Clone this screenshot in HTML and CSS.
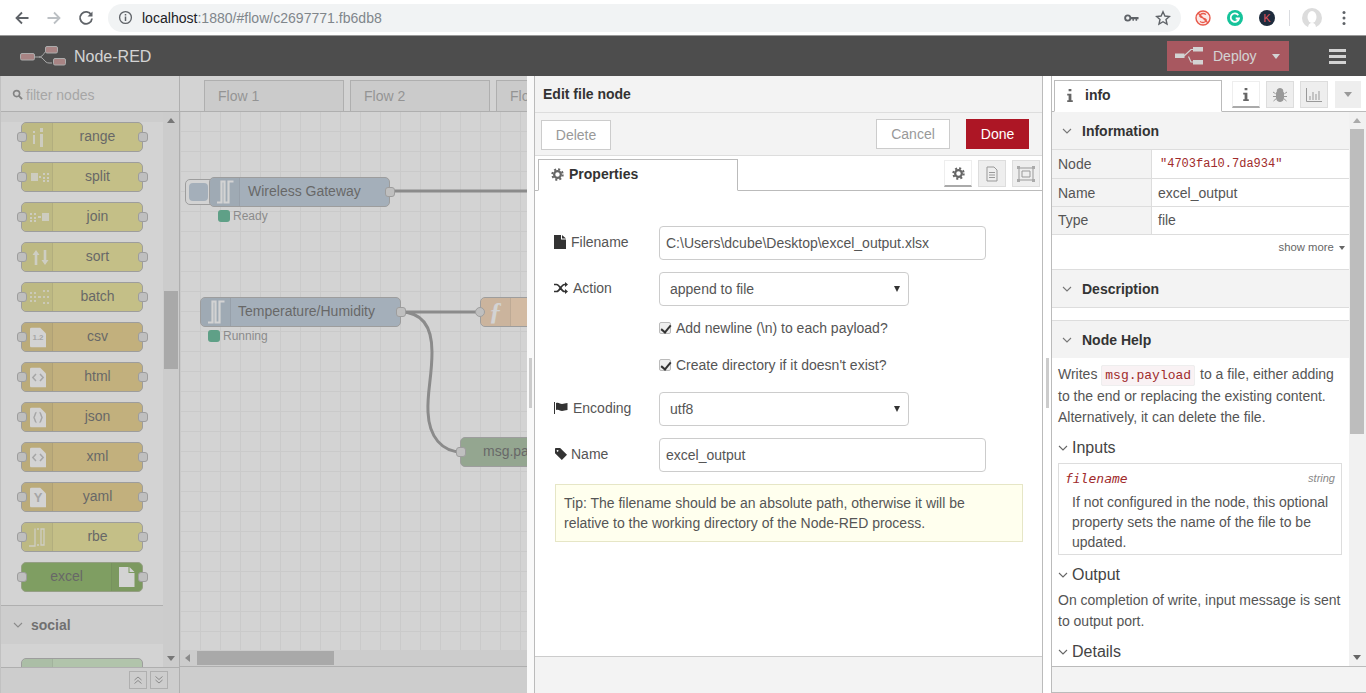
FILE: index.html
```html
<!DOCTYPE html>
<html lang="en">
<head>
<meta charset="utf-8">
<title>Node-RED</title>
<link rel="stylesheet" href="styles.css">
</head>
<body>
<svg class="defs" width="0" height="0">
  <symbol id="file" viewBox="0 0 12 14"><path d="M0 0h7v4.500h5V14H0zM8 0l4 3.500H8z"/></symbol>
  <symbol id="cog" viewBox="0 0 14 14"><circle cx="7" cy="7" r="3.600" fill="none" stroke="currentColor" stroke-width="2.400"/><circle cx="7" cy="7" r="5.600" fill="none" stroke="currentColor" stroke-width="2.200" stroke-dasharray="2.200 2.200"/></symbol>
  <symbol id="chev" viewBox="0 0 10 6"><path d="M1 1l4 4 4-4" fill="none" stroke="currentColor" stroke-width="1.100"/></symbol>
  <symbol id="doc" viewBox="0 0 16 20"><path d="M0 1.500Q0 0 1.500 0H10l6 6v14H1.500Q0 20 0 18.500z" fill="#fff"/></symbol>
  <symbol id="pulse" viewBox="0 0 18 24"><path d="M1 22.500h4.500V1.500h3V22.500h4V1.500h5" fill="none" stroke="#fff" stroke-width="2.200"/></symbol>
</svg>

<div class="browser">
  <svg class="nav" viewBox="0 0 16 16"><path d="M14.500 8H3M8 2.500L2.500 8 8 13.500" fill="none" stroke="#5f6368" stroke-width="1.800"/></svg>
  <svg class="nav" viewBox="0 0 16 16"><path d="M1.500 8H13M8 2.500L13.500 8 8 13.500" fill="none" stroke="#bcc0c4" stroke-width="1.800"/></svg>
  <svg class="nav" viewBox="0 0 16 16"><path d="M13.300 5A6 6 0 1 0 14 8.500" fill="none" stroke="#5f6368" stroke-width="1.800"/><path d="M14.500 1.500v5h-5z" fill="#5f6368"/></svg>
  <div class="omnibox">
    <svg class="url-info" viewBox="0 0 16 16"><circle cx="8" cy="8" r="6.300" fill="none" stroke="#5f6368" stroke-width="1.400"/><path d="M7.200 7h1.600v4.800H7.200zM7.200 4.200h1.600v1.600H7.200z" fill="#5f6368"/></svg>
    <span class="url"><span class="url-host">localhost</span>:1880/#flow/c2697771.fb6db8</span>
    <svg class="key" viewBox="0 0 16 10"><circle cx="4" cy="5" r="2.800" fill="none" stroke="#5f6368" stroke-width="2"/><path d="M6.500 3.800H15.500V6.200H14V8H12.300V6.200H10.600V8H9V6.200H6.500z" fill="#5f6368"/></svg>
    <svg class="star" viewBox="0 0 16 16"><path d="M8 1.800l1.900 4.200 4.500.5-3.400 3 1 4.500L8 11.700 4 14l1-4.500-3.400-3 4.500-.5z" fill="none" stroke="#5f6368" stroke-width="1.400"/></svg>
  </div>
  <div class="ext-row">
    <svg class="ext" viewBox="0 0 16 16"><circle cx="8" cy="8" r="7" fill="#fbe9e7" stroke="#e8594a" stroke-width="1.400"/><path d="M11 4.500Q8 2.500 5.500 4.500T8 8t2.500 3.500Q8 13.500 5 11.500M3 3l10 10" fill="none" stroke="#e8594a" stroke-width="1.300"/></svg>
    <svg class="ext" viewBox="0 0 16 16"><circle cx="8" cy="8" r="8" fill="#15c39a"/><path d="M11.300 5.200A4.200 4.200 0 1 0 12 8.500H8.700" fill="none" stroke="#fff" stroke-width="1.800"/></svg>
    <div class="ext-k">K</div>
    <div class="ext-div"></div>
    <svg class="avatar" viewBox="0 0 20 20"><circle cx="10" cy="10" r="10" fill="#dcdcdc"/><ellipse cx="10" cy="9" rx="4.500" ry="6" fill="#fff"/><path d="M6 20q0-5 4-5t4 5z" fill="#fff"/></svg>
    <svg class="dots" viewBox="0 0 4 16"><circle cx="2" cy="2.500" r="1.500"/><circle cx="2" cy="8" r="1.500"/><circle cx="2" cy="13.500" r="1.500"/></svg>
  </div>
</div>

<header class="app-header">
  <svg class="logo" viewBox="0 0 46 20">
    <path d="M15 11h4C24 11 24 4 29 4h2M19 11c5 0 5 6 10 6h3" fill="none" stroke="#b5b5b5" stroke-width="1"/>
    <rect x="0.500" y="7.500" width="14" height="6.500" rx="1.500" fill="#ad6a6a" stroke="#b5b5b5"/>
    <rect x="25.500" y="0.500" width="12" height="6.500" rx="1.500" fill="#ad6a6a" stroke="#b5b5b5"/>
    <rect x="33.500" y="12.500" width="12" height="6.500" rx="1.500" fill="#ad6a6a" stroke="#b5b5b5"/>
  </svg>
  <span class="brand">Node-RED</span>
  <div class="deploy">
    <svg class="deploy-icon" viewBox="0 0 28 18"><path d="M0 6.500h9.500v4.500H0zM18 0h10v4.500H18zM18 13h10v4.500H18z" fill="#fff"/><path d="M9 9L16 2.500h3M13.500 9.500L16 15h3" fill="none" stroke="#fff" stroke-width="1.200"/></svg>
    <span class="deploy-label">Deploy</span>
    <span class="caret deploy-caret"></span>
  </div>
  <div class="burger"><i></i><i></i><i></i></div>
</header>

<main class="main">
  <div class="dimmed">
    <aside class="palette">
      <div class="filter">
        <svg class="search" viewBox="0 0 12 12"><circle cx="5" cy="5" r="3.300" fill="none" stroke="#666" stroke-width="1.800"/><path d="M7.500 7.500L11 11" stroke="#666" stroke-width="2"/></svg>
        <span>filter nodes</span>
      </div>
      <div class="pal-scroll">
        <div class="pal-list">
          <div class="pnode fn"><span class="port l"></span><span class="picon"><svg width="24" height="24" viewBox="-4 -1 24 24" fill="#fff" opacity=".75"><path d="M4 9h2v9H4zM4 5h2v2H4zM11 8h3v13h-3zM11 2h3v4h-3z"/></svg></span><span class="plabel">range</span><span class="port r"></span></div>
          <div class="pnode fn"><span class="port l"></span><span class="picon"><svg width="24" height="24" viewBox="-2 0 24 24" fill="#fff" opacity=".75"><path d="M4 8h7v8H4zM12 11h2v2h-2zM16 8h2v2h-2zM20 8h2v2h-2zM16 12h2v2h-2zM20 12h2v2h-2zM16 15h2v2h-2zM20 15h2v2h-2z"/></svg></span><span class="plabel">split</span><span class="port r"></span></div>
          <div class="pnode fn"><span class="port l"></span><span class="picon"><svg width="24" height="24" viewBox="-2 0 24 24" fill="#fff" opacity=".75"><path d="M3 8h2v2H3zM7 8h2v2H7zM3 12h2v2H3zM7 12h2v2H7zM3 15h2v2H3zM7 15h2v2H7zM11 11h3v2h-3zM15 8h7v8h-7z"/></svg></span><span class="plabel">join</span><span class="port r"></span></div>
          <div class="pnode fn"><span class="port l"></span><span class="picon"><svg width="24" height="24" viewBox="-4 0 24 24" fill="#fff" opacity=".8"><path d="M7 5l3.500 5H8.300v10H5.700V10H3.500zM16 20l-3.500-5h2.200V5h2.600v10h2.200z"/></svg></span><span class="plabel">sort</span><span class="port r"></span></div>
          <div class="pnode fn"><span class="port l"></span><span class="picon"><svg width="24" height="24" viewBox="-2 0 24 24" fill="#fff" opacity=".65"><path d="M3 7h2v2H3zM7 7h2v2H7zM3 11h2v2H3zM7 11h2v2H7zM3 15h2v2H3zM7 15h2v2H7zM11 11h3v2h-3zM16 5h2v2h-2zM20 5h2v2h-2zM16 11h2v2h-2zM20 11h2v2h-2zM16 17h2v2h-2zM20 17h2v2h-2z"/></svg></span><span class="plabel">batch</span><span class="port r"></span></div>
          <div class="pnode pr"><span class="port l"></span><span class="picon"><svg class="doci" viewBox="0 0 16 20"><use href="#doc"/><text x="8" y="12" class="doct">1.2</text></svg></span><span class="plabel">csv</span><span class="port r"></span></div>
          <div class="pnode pr"><span class="port l"></span><span class="picon"><svg class="doci" viewBox="0 0 16 20"><use href="#doc"/><path d="M6 6.500L2.800 10 6 13.500M10 6.500l3.200 3.500L10 13.500" class="docs"/></svg></span><span class="plabel">html</span><span class="port r"></span></div>
          <div class="pnode pr"><span class="port l"></span><span class="picon"><svg class="doci" viewBox="0 0 16 20"><use href="#doc"/><path d="M6.500 5C4.500 5 5.500 9.500 3.500 10 5.500 10.500 4.500 15 6.500 15M9.500 5c2 0 1 4.500 3 5-2 .5-1 5-3 5" class="docs"/></svg></span><span class="plabel">json</span><span class="port r"></span></div>
          <div class="pnode pr"><span class="port l"></span><span class="picon"><svg class="doci" viewBox="0 0 16 20"><use href="#doc"/><path d="M6 6.500L2.800 10 6 13.500M10 6.500l3.200 3.500L10 13.500" class="docs"/></svg></span><span class="plabel">xml</span><span class="port r"></span></div>
          <div class="pnode pr"><span class="port l"></span><span class="picon"><svg class="doci" viewBox="0 0 16 20"><use href="#doc"/><text x="8" y="14" class="doct big">Y</text></svg></span><span class="plabel">yaml</span><span class="port r"></span></div>
          <div class="pnode fn"><span class="port l"></span><span class="picon"><svg width="24" height="24" viewBox="-2 0 24 24" opacity=".8"><path d="M8 3.500V21H2M14 4h3v16h-3zM10 4h2M10 20h2" fill="none" stroke="#fff" stroke-width="1.300"/></svg></span><span class="plabel">rbe</span><span class="port r"></span></div>
          <div class="pnode xl"><span class="port l"></span><span class="plabel">excel</span><span class="picon right"><svg width="16" height="20" viewBox="0 0 16 20"><path d="M0 0h9.500v6H15.500v14H0zM10.500 0l5 5h-5z" fill="#fff"/></svg></span><span class="port r"></span></div>
        </div>
        <div class="pal-cat">
          <svg class="chev"><use href="#chev"/></svg>
          <span>social</span>
        </div>
        <div class="pal-list short">
          <div class="pnode tw"><span class="picon"></span></div>
        </div>
        <div class="vbar"><span class="sb-up"></span><span class="thumb"></span><span class="sb-down"></span></div>
      </div>
      <div class="pal-foot">
        <span class="foot-btn">
          <svg width="10" height="10" viewBox="0 0 10 10"><path d="M1.500 5L5 2l3.500 3M1.500 8.500L5 5.500l3.500 3" fill="none" stroke="#777"/></svg>
        </span>
        <span class="foot-btn">
          <svg width="10" height="10" viewBox="0 0 10 10"><path d="M1.500 1.500L5 4.500l3.500-3M1.500 5L5 8l3.500-3" fill="none" stroke="#777"/></svg>
        </span>
      </div>
    </aside>

    <section class="workspace">
      <div class="ws-tabs">
        <div class="ws-tab">Flow 1</div>
        <div class="ws-tab">Flow 2</div>
        <div class="ws-tab">Flow 3</div>
      </div>
      <div class="canvas">
        <svg class="wires" width="347" height="538" viewBox="0 0 347 538">
          <path d="M215 79H347" />
          <path d="M220 200H305" />
          <path d="M220 200C243 200 252 215 252 240S247 280 248 300C249 325 262 340 282 340" />
        </svg>
        <div class="btn-stub"><i></i></div>
        <div class="cnode blue gw"><span class="cicon"><svg width="18" height="24"><use href="#pulse"/></svg></span><span class="clabel">Wireless Gateway</span><span class="cport r"></span></div>
        <div class="status st1"><i></i>Ready</div>
        <div class="cnode blue th"><span class="cicon"><svg width="18" height="24"><use href="#pulse"/></svg></span><span class="clabel">Temperature/Humidity</span><span class="cport r"></span></div>
        <div class="status st2"><i></i>Running</div>
        <div class="cnode fnc"><span class="cport l"></span><span class="cicon"><span class="fsym">ƒ</span></span></div>
        <div class="cnode dbg"><span class="cport l sq"></span><span class="clabel">msg.payload</span></div>
      </div>
      <div class="hbar"><span class="hb-left"></span><span class="hthumb"></span></div>
      <div class="ws-foot"></div>
    </section>
  </div>

  <section class="tray-wrap">
    <div class="grip"></div>
    <div class="tray">
      <div class="tray-title">Edit file node</div>
      <div class="tray-actions">
        <button class="tbtn del">Delete</button>
        <span class="spacer"></span>
        <button class="tbtn cancel">Cancel</button>
        <button class="tbtn done">Done</button>
      </div>
      <div class="tray-tabs">
        <div class="ptab"><svg class="cogi"><use href="#cog"/></svg>Properties</div>
        <span class="spacer"></span>
        <span class="tbox on"><svg class="cogi"><use href="#cog"/></svg></span>
        <span class="tbox"><svg width="12" height="16" viewBox="0 0 12 16"><path d="M1 1h7l3 3v11H1zM3 6.500h6M3 9h6M3 11.500h6" fill="none" stroke="#999"/></svg></span>
        <span class="tbox"><svg width="18" height="16" viewBox="0 0 18 16"><path d="M2 2h14v12H2zM5 5h8v6H5z" fill="none" stroke="#999"/><path d="M0 0h3v3H0zM15 0h3v3h-3zM0 13h3v3H0zM15 13h3v3h-3z" fill="#aaa"/></svg></span>
      </div>
      <form class="form">
        <div class="frow">
          <label class="flabel"><svg class="fico fi-file" viewBox="0 0 12 14"><use href="#file"/></svg>Filename</label>
          <div class="field wide">C:\Users\dcube\Desktop\excel_output.xlsx</div>
        </div>
        <div class="frow">
          <label class="flabel"><svg class="fico" viewBox="0 0 14 12"><path d="M0 2.500h2.500C6 2.500 7 9.500 10.500 9.500H12M0 9.500h2.500C6 9.500 7 2.500 10.500 2.500H12" fill="none" stroke="#333" stroke-width="1.700"/><path d="M11 0l3 2.500L11 5zM11 7l3 2.500L11 12z" fill="#333"/></svg>Action</label>
          <div class="field sel"><span>append to file</span><i class="sel-arrow"></i></div>
        </div>
        <div class="crow"><span class="check"></span>Add newline (\n) to each payload?</div>
        <div class="crow"><span class="check"></span>Create directory if it doesn't exist?</div>
        <div class="frow">
          <label class="flabel"><svg class="fico" viewBox="0 0 14 12"><path d="M0 0h1v12H0z" fill="#333"/><path d="M2 1c3-1 4 1 6 1s3-1 5.500-1v7c-2.500 0-3.500 1-5.500 1S5 7 2 8z" fill="#333"/></svg>Encoding</label>
          <div class="field sel"><span>utf8</span><i class="sel-arrow"></i></div>
        </div>
        <div class="frow">
          <label class="flabel"><svg class="fico fi-tag" viewBox="0 0 14 14"><path fill-rule="evenodd" d="M0 1q0-1 1-1h5l8 8-6 6-8-8zM3 2.200a1 1 0 1 0 .01 0z" fill="#333"/></svg>Name</label>
          <div class="field wide">excel_output</div>
        </div>
        <div class="tip">Tip: The filename should be an absolute path, otherwise it will be relative to the working directory of the Node-RED process.</div>
      </form>
      <div class="tray-foot"></div>
    </div>
    <div class="grip right"></div>
  </section>

  <aside class="sidebar">
    <div class="side-tabs">
      <div class="stab"><svg class="iico" viewBox="0 0 6 14"><path d="M1.500 0h3v2.500h-3zM0 5h4.500v7H6v2H0v-2h1.500V7H0z"/></svg>info</div>
      <span class="sbox on"><svg class="iico" viewBox="0 0 6 14"><path d="M1.500 0h3v2.500h-3zM0 5h4.500v7H6v2H0v-2h1.500V7H0z"/></svg></span>
      <span class="sbox"><svg width="14" height="14" viewBox="0 0 14 14" fill="#999"><path d="M4 3.500a3 3 0 0 1 6 0zM3.500 4.500h7V10a3.500 3.500 0 0 1-7 0zM0 4l2.700 1.800M14 4l-2.700 1.800M0 8.500h3M14 8.500h-3M.5 13L3 10.800M13.500 13L11 10.800" stroke="#999"/></svg></span>
      <span class="sbox"><svg width="16" height="14" viewBox="0 0 16 14"><path d="M.5 0v13.500H16M4 12V8M7 12V4M10 12V6M13 12V3" fill="none" stroke="#999"/></svg></span>
      <span class="sbox plain"><span class="caret side-caret"></span></span>
    </div>
    <div class="side-scroll">
      <div class="side-content">
        <div class="shead first"><svg class="chev"><use href="#chev"/></svg>Information</div>
        <div class="irow r1"><div class="ikey">Node</div><div class="ival mono">"4703fa10.7da934"</div></div>
        <div class="irow"><div class="ikey">Name</div><div class="ival">excel_output</div></div>
        <div class="irow r3"><div class="ikey">Type</div><div class="ival">file</div></div>
        <div class="more">show more <span class="more-caret"></span></div>
        <div class="shead"><svg class="chev"><use href="#chev"/></svg>Description</div>
        <div class="sgap"></div>
        <div class="shead"><svg class="chev"><use href="#chev"/></svg>Node Help</div>
        <div class="help">
          <p class="hp">Writes <code class="code">msg.payload</code> to a file, either adding to the end or replacing the existing content. Alternatively, it can delete the file.</p>
          <h3 class="hh"><svg class="chev"><use href="#chev"/></svg>Inputs</h3>
          <div class="dl">
            <div class="dt"><span class="dn">filename</span><span class="dtype">string</span></div>
            <div class="dd">If not configured in the node, this optional property sets the name of the file to be updated.</div>
          </div>
          <h3 class="hh o"><svg class="chev"><use href="#chev"/></svg>Output</h3>
          <p class="hp out">On completion of write, input message is sent to output port.</p>
          <h3 class="hh d"><svg class="chev"><use href="#chev"/></svg>Details</h3>
        </div>
      </div>
      <div class="side-bar"><span class="sb-up"></span><span class="sthumb"></span><span class="sb-down"></span></div>
    </div>
    <div class="side-foot"></div>
  </aside>
</main>
</body>
</html>
```

FILE: styles.css
```css
* { box-sizing: border-box; }
html, body { margin: 0; height: 100%; }
body {
  width: 1366px; height: 693px; overflow: hidden;
  display: flex; flex-direction: column;
  font-family: "Liberation Sans", Arial, sans-serif;
  font-size: 14px; color: #555; background: #fff;
}
.defs { position: absolute; }

/* browser chrome */
.browser {
  height: 36px; flex: none; display: flex; align-items: center;
  padding: 0 0 0 14px; border-bottom: 1px solid #999; background: #fff;
}
.nav { width: 16px; height: 16px; margin-right: 16px; flex: none; }
.nav:nth-of-type(3) { margin-right: 14px; }
.omnibox {
  width: 1073px; height: 28px; border-radius: 14px; background: #f1f3f4;
  display: flex; align-items: center; padding: 0 9px 0 10px; flex: none;
}
.url-info { width: 15px; height: 15px; margin-right: 9px; }
.url { font-size: 14.050px; color: #80868b; flex: 1; }
.url-host { color: #202124; }
.key { width: 15px; height: 10px; margin-right: 16px; }
.star { width: 16px; height: 16px; margin-right: 1px; }
.ext-row { display: flex; align-items: center; flex: 1; padding-left: 14px; }
.ext { width: 16px; height: 16px; margin-right: 16px; flex: none; }
.ext-k {
  width: 16px; height: 16px; border-radius: 50%; background: #1e2b3c; color: #e0525e;
  font-size: 11px; line-height: 16px; text-align: center; flex: none;
}
.ext-div { width: 1px; height: 16px; background: #dadce0; margin: 0 12px 0 14px; }
.avatar { width: 20px; height: 20px; margin-right: 20px; }
.dots { width: 4px; height: 16px; fill: #5f6368; }

/* header */
.app-header {
  position: relative; height: 40px; flex: none; background: #000;
  display: flex; align-items: center; padding-left: 20px; color: #fff;
}
.app-header::after, .dimmed::after {
  content: ""; position: absolute; inset: 0; background: #a2a2a2; opacity: .475; pointer-events: none;
}
.logo { width: 46px; height: 20px; }
.brand { font-size: 16px; margin-left: 8px; color: #fff; position: relative; top: 1px; }
.deploy {
  margin-left: auto; width: 122px; height: 30px; background: #AD1625;
  display: flex; align-items: center; color: #fff;
}
.deploy-icon { width: 28px; height: 18px; margin-left: 8px; }
.deploy-label { margin-left: 10px; }
.caret { width: 0; height: 0; border-left: 4.500px solid transparent; border-right: 4.500px solid transparent; border-top: 5px solid #fff; }
.deploy-caret { margin-left: 15px; }
.burger { width: 17px; margin: 0 20px 0 40px; display: flex; flex-direction: column; gap: 3px; }
.burger i { height: 3px; background: #fff; }

/* dimmed part */
.main { flex: 1; display: flex; min-height: 0; }
.dimmed { position: relative; width: 527px; flex: none; display: flex; overflow: hidden; }
.palette {
  width: 180px; flex: none; display: flex; flex-direction: column;
  background: #f3f3f3; border-right: 1px solid #bbb; border-left: 1px solid #ddd;
}
.filter {
  height: 36px; flex: none; display: flex; align-items: center; padding: 2px 0 0 11px;
  background: #fff; border-bottom: 1px solid #bbb; color: #aaa; font-size: 14px;
}
.search { width: 11px; height: 11px; margin-right: 3px; }
.pal-scroll { flex: 1; position: relative; overflow: hidden; min-height: 0; padding-top: 10px; }
.pal-list { width: 162px; padding: 0 0 0 20px; background: #fff; height: 483px; }
.pal-list.short { height: 60px; padding-top: 14px; }
.pnode {
  position: relative; width: 122px; height: 30px; margin-bottom: 10px;
  border: 1px solid #999; border-radius: 5px; display: flex; color: #333; font-size: 14px;
}
.fn { background: #E2D96E; }
.pr { background: #DEBD5C; }
.xl { background: #5F9A28; border-color: #8a9c6c; }
.tw { background: #BEE3B4; }
.picon {
  width: 31px; flex: none; background: rgba(0,0,0,.05); border-right: 1px solid rgba(0,0,0,.1);
  display: flex; align-items: center; justify-content: center; border-radius: 5px 0 0 5px;
}
.picon.right { border-right: 0; border-left: 1px solid rgba(0,0,0,.1); border-radius: 0 5px 5px 0; }
.plabel { flex: 1; text-align: center; line-height: 26px; }
.doci { width: 16px; height: 21px; position: relative; left: 1px; }
.doct { font: bold 8px "Liberation Sans", sans-serif; text-anchor: middle; fill: #aaa; }
.doct.big { font-size: 13px; }
.docs { fill: none; stroke: #aaa; stroke-width: 1.500; }
.port, .cport {
  position: absolute; width: 10px; height: 10px; top: 9px; background: #d9d9d9;
  border: 1px solid #999; border-radius: 3px;
}
.port.l { left: -5px; }
.port.r { right: -6px; }
.pal-cat {
  height: 39px; display: flex; align-items: center; padding-left: 12px; width: 162px;
  background: #f3f3f3; border-top: 1px solid #bbb; font-weight: bold; color: #444;
}
.chev { width: 10px; height: 6px; color: #777; flex: none; }
.pal-cat .chev { margin-right: 8px; }
.vbar {
  position: absolute; top: 0; right: 0; bottom: 0; width: 16px; background: #f1f1f1;
}
.sb-up, .sb-down {
  position: absolute; left: 4px; width: 0; height: 0;
  border-left: 4px solid transparent; border-right: 4px solid transparent;
}
.sb-up { top: 6px; border-bottom: 5px solid #505050; }
.sb-down { bottom: 6px; border-top: 5px solid #505050; }
.thumb { position: absolute; left: 1px; width: 14px; top: 179px; height: 78px; background: #b0b0b0; }
.pal-foot {
  height: 26px; flex: none; display: flex; justify-content: flex-end; align-items: center; gap: 3px;
  padding: 0 11px 1px 0; background: #f3f3f3; border-top: 1px solid #bbb;
}
.foot-btn {
  width: 18px; height: 18px; border: 1px solid #bbb; display: flex; align-items: center; justify-content: center; background: #f3f3f3;
}

.workspace { flex: 1; display: flex; flex-direction: column; min-width: 0; background: #fff; }
.ws-tabs {
  height: 36px; flex: none; display: flex; gap: 6px; padding: 4px 0 0 24px; background: #fff;
  border-bottom: 1px solid #bbb; overflow: hidden;
}
.ws-tab {
  width: 140px; flex: none; background: #f0f0f0; border: 1px solid #bbb; border-bottom: 0;
  color: #888; line-height: 30px; padding-left: 13px;
}
.canvas {
  position: relative; flex: 1; min-height: 0; overflow: hidden;
  background-color: #fff;
  background-image: linear-gradient(#eee 1px, transparent 1px), linear-gradient(90deg, #eee 1px, transparent 1px);
  background-size: 20px 20px; background-position: 0 19px;
}
.wires { position: absolute; left: 0; top: 0; fill: none; stroke: #777; stroke-width: 3; }
.cnode {
  position: absolute; height: 30px; border: 1px solid #999; border-radius: 5px; display: flex; color: #333; font-size: 14px;
}
.blue { background: #a6bbcf; }
.gw { left: 29px; top: 65px; width: 181px; }
.th { left: 20px; top: 185px; width: 201px; }
.fnc { left: 300px; top: 185px; width: 70px; background: #fdd0a2; }
.dbg { left: 280px; top: 325px; width: 150px; background: #87a980; }
.cicon {
  width: 30px; flex: none; background: rgba(0,0,0,.05); border-right: 1px solid rgba(0,0,0,.1);
  display: flex; align-items: center; justify-content: center; border-radius: 5px 0 0 5px;
}
.clabel { line-height: 26px; padding-left: 8px; white-space: nowrap; }
.th .clabel { padding-left: 7px; }
.dbg .clabel { padding-left: 22px; }
.fsym { color: #fff; font-family: "Liberation Serif", serif; font-style: italic; font-weight: bold; font-size: 26px; line-height: 28px; }
.cport.r { right: -6px; }
.cport.l { left: -6px; border-radius: 50%; }
.cport.sq { border-radius: 3px; left: -5px; }
.btn-stub {
  position: absolute; left: 5px; top: 67px; width: 30px; height: 26px; border: 1px solid #999;
  border-radius: 5px; background: #fff; padding: 3px;
}
.btn-stub i { display: block; width: 19px; height: 18px; border-radius: 4px; background: #a6bbcf; }
.status { position: absolute; font-size: 12px; color: #777; display: flex; align-items: center; height: 12px; }
.status i { width: 12px; height: 12px; border-radius: 3px; background: #249e6e; margin-right: 3px; }
.st1 { left: 38px; top: 98px; }
.st2 { left: 28px; top: 218px; }
.hbar { height: 16px; flex: none; background: #f1f1f1; position: relative; }
.hb-left {
  position: absolute; left: 5px; top: 4px; width: 0; height: 0;
  border-top: 4px solid transparent; border-bottom: 4px solid transparent; border-right: 5px solid #777;
}
.hthumb { position: absolute; left: 17px; top: 1px; width: 137px; height: 14px; background: #b0b0b0; }
.ws-foot { height: 27px; flex: none; background: #f3f3f3; border-top: 1px solid #bbb; }

/* tray */
.tray-wrap { width: 524px; flex: none; display: flex; background: #f9f9f9; }
.grip { width: 7px; flex: none; position: relative; }
.grip::after {
  content: ""; position: absolute; left: 2px; top: 282px; width: 3px; height: 50px; background: #ccc;
}
.grip.right { width: 8px; background: #fff; }
.grip.right::after { left: 3px; }
.tray {
  flex: 1; min-width: 0; display: flex; flex-direction: column; background: #fff;
  border-left: 1px solid #bbb; border-right: 1px solid #bbb;
}
.tray-title {
  height: 37px; flex: none; background: #f3f3f3; border-bottom: 1px solid #ddd;
  font-weight: bold; color: #333; line-height: 36px; padding-left: 8px;
}
.tray-actions {
  height: 43px; flex: none; display: flex; align-items: flex-start; background: #f3f3f3; padding: 6px 13px 0 6px;
  border-bottom: 1px solid #ddd;
}
.spacer { flex: 1; }
.tbtn {
  height: 30px; border: 1px solid #ccc; background: #fff; color: #999; font: 14px "Liberation Sans", sans-serif; padding: 0;
}
.del { width: 70px; margin-top: 1px; color: #999; }
.cancel { width: 74px; margin-right: 16px; }
.done { width: 63px; background: #AD1625; border-color: #AD1625; color: #fff; }
.tray-tabs {
  height: 35px; flex: none; display: flex; align-items: flex-end; padding: 0 2px 0 3px; border-bottom: 1px solid #bbb; background: #fff;
}
.ptab {
  width: 200px; height: 32px; margin-bottom: -1px; background: #fff; border: 1px solid #bbb; border-bottom: 1px solid #fff;
  font-weight: bold; color: #333; display: flex; align-items: center; padding-left: 12px; padding-bottom: 2px;
}
.cogi { width: 13px; height: 13px; color: #666; margin-right: 5px; }
.tbox {
  width: 28px; height: 27px; margin: 0 0 3px 6px; background: #eee; border: 1px solid #ddd; display: flex; align-items: center; justify-content: center;
}
.tbox.on { background: #fff; border-color: #eee; border-bottom: 2px solid #aaa; }
.tbox.on .cogi { margin: 0; }
.form { flex: 1; min-height: 0; padding: 35px 19px 0; }
.frow { display: flex; margin-bottom: 12px; align-items: flex-start; }
.flabel { width: 105px; flex: none; height: 32px; line-height: 32px; display: flex; align-items: center; color: #555; }
.fico { width: 14px; height: 12px; margin-right: 5px; flex: none; }
.fi-file { width: 12px; height: 14px; fill: #333; margin-right: 5px; }
.fi-tag { margin-right: 3px; }
.field {
  height: 34px; border: 1px solid #ccc; border-radius: 4px; background: #fff; line-height: 32px;
  padding: 0 6px; color: #555; white-space: nowrap;
}
.wide { width: 327px; }
.sel { width: 250px; padding-left: 10px; display: flex; align-items: center; justify-content: space-between; }
.sel-arrow {
  width: 0; height: 0; border-left: 3.500px solid transparent; border-right: 3.500px solid transparent; border-top: 6px solid #333; margin-right: 2px;
}
.crow { height: 20px; margin: 0 0 17px 105px; display: flex; align-items: center; color: #555; }
.check {
  width: 12px; height: 12px; margin-right: 5px; border: 1px solid #bbb; border-radius: 2px; background: #eee; position: relative; flex: none;
}
.check::after {
  content: ""; position: absolute; left: 3px; top: 0; width: 4px; height: 8px; border: solid #333; border-width: 0 2px 2px 0; transform: rotate(40deg);
}
.tip {
  height: 58px; width: 468px; margin-left: 1px; border: 1px solid #e6e6c6; background: #ffe; padding: 8px 40px 8px 8px; line-height: 20px; color: #555; font-size: 14px;
}
.tray-foot { height: 37px; flex: none; background: #f3f3f3; border-top: 1px solid #ccc; }

/* sidebar */
.sidebar { flex: 1; min-width: 0; display: flex; flex-direction: column; border-left: 1px solid #bbb; background: #fff; }
.side-tabs {
  height: 36px; flex: none; display: flex; align-items: flex-end; padding-left: 2px; border-bottom: 1px solid #bbb;
}
.stab {
  width: 168px; height: 32px; margin-bottom: -1px; background: #fff; border: 1px solid #bbb; border-bottom-color: #fff;
  font-weight: bold; color: #333; display: flex; align-items: center; padding: 0 0 2px 12px;
}
.iico { width: 6px; height: 13px; fill: #666; margin-right: 12px; flex: none; }
.sbox {
  width: 28px; height: 27px; margin: 0 3px 3px 3px; background: #eee; border: 1px solid #ddd;
  display: flex; align-items: center; justify-content: center;
}
.sbox:nth-of-type(1) { margin-left: 10px; }
.sbox.on { background: #fff; border-color: #eee; border-bottom: 2px solid #aaa; }
.sbox.on .iico { margin: 0; }
.sbox.plain { width: 26px; border: 0; margin-left: 4px; }
.side-caret { border-top-color: #999; }
.side-scroll { flex: 1; min-height: 0; position: relative; overflow: hidden; }
.side-content { width: 297px; height: 100%; overflow: hidden; }
.shead {
  height: 38px; background: #f3f3f3; display: flex; align-items: center; font-weight: bold; color: #333; padding-left: 10px;
  border-top: 1px solid #ddd;
}
.shead.first { height: 38px; border-top: 0; border-bottom: 1px solid #ddd; }
.shead .chev { margin-right: 10px; }
.irow { display: flex; height: 28px; border-bottom: 1px solid #ddd; }
.irow.r1 { height: 29px; }
.ikey { width: 100px; background: #f3f3f3; border-right: 1px solid #ddd; padding: 0 0 0 6px; line-height: 28px; flex: none; }
.ival { flex: 1; padding: 0 0 0 6px; line-height: 28px; white-space: nowrap; }
.irow.r3 .ikey, .irow.r3 .ival { line-height: 27px; }
.mono { font-family: "Liberation Mono", monospace; font-size: 12px; color: #a02b2b; padding-left: 8px; }
.more { height: 34px; font-size: 11.300px; text-align: right; padding: 6px 4px 0 0; color: #666; }
.more-caret { display: inline-block; width: 0; height: 0; border-left: 3px solid transparent; border-right: 3px solid transparent; border-top: 4px solid #666; vertical-align: middle; margin-left: 2px; }
.sgap { height: 13px; }
.shead + .sgap { border-top: 1px solid #ddd; }
.help { padding: 6px 6px 0; color: #555; line-height: 21px; }
.hp { margin: 0; }
.code {
  font-family: "Liberation Mono", monospace; font-size: 13px; color: #a02b2b; background: #f9f2f4;
  border: 1px solid #eee; border-radius: 2px; padding: 2px 3px; margin: 0 1px 0 0;
}
.hh { margin: 9px 0 4px; font-size: 16px; font-weight: normal; color: #444; line-height: 22px; display: flex; align-items: center; height: 22px; }
.hh .chev { margin-right: 4px; color: #666; }
.hh.o { margin-top: 9px; margin-bottom: 4px; }
.hh.d { margin-top: 9px; }
.dl { border: 1px solid #ddd; height: 92px; width: 284px; padding: 4px 6px; margin-bottom: 0; }
.dt { display: flex; justify-content: space-between; line-height: 21px; margin-bottom: 3px; }
.dn { font-family: "DejaVu Sans Mono", monospace; font-style: italic; font-size: 13px; color: #a02b2b; }
.dtype { font-style: italic; font-size: 11px; color: #888; }
.dd { padding-left: 7px; line-height: 20px; }
.side-bar { position: absolute; top: 0; right: 0; bottom: 0; width: 17px; background: #f1f1f1; }
.side-bar .sb-up, .side-bar .sb-down { left: 4px; border-top-color: #666; border-bottom-color: #aaa; }
.sthumb { position: absolute; left: 1px; top: 17px; width: 14px; height: 305px; background: #bdbdbd; }
.side-foot { height: 27px; flex: none; background: #f3f3f3; border-top: 1px solid #bbb; border-bottom: 1px solid #bbb; }
```
